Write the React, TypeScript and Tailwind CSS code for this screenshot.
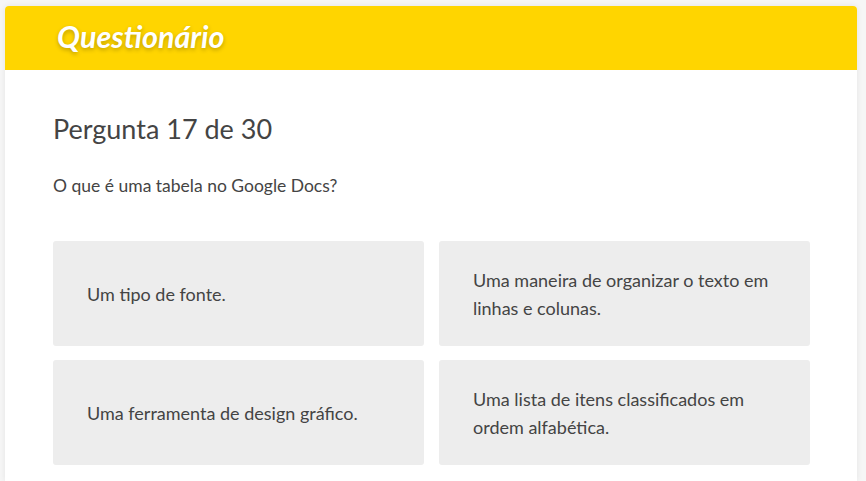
const options = [
  "Um tipo de fonte.",
  "Uma maneira de organizar o texto em linhas e colunas.",
  "Uma ferramenta de design gráfico.",
  "Uma lista de itens classificados em ordem alfabética.",
];

export default function App() {
  return (
    <div
      className="min-h-screen bg-[#f6f6f6] pt-[6px] pl-[5px] pr-[9px]"
      style={{ fontFamily: "Lato, 'Noto Sans', sans-serif" }}
    >
      <div className="w-[852px] rounded-t-[4px] bg-white shadow-[0_0_6px_rgba(0,0,0,0.08)]">
        <div className="flex h-[64px] items-center rounded-t-[4px] bg-[#ffd500] pl-[52px] pb-[3px]">
          <h1 className="text-[30.5px] font-bold italic text-white [text-shadow:0_2px_4px_rgba(0,0,0,0.25)]">
            Questionário
          </h1>
        </div>
        <div className="pl-[48px] pr-[47px] pt-[41px] pb-[16px] text-[#444]">
          <h2 className="text-[27px] leading-[36px]">Pergunta 17 de 30</h2>
          <p className="mt-[27px] text-[17.5px] leading-[24px]">O que é uma tabela no Google Docs?</p>
          <div className="mt-[43px] grid grid-cols-2 gap-x-[15px] gap-y-[14px]">
            {options.map((o) => (
              <div
                key={o}
                className="flex h-[105px] items-center rounded-[3px] bg-[#ededed] pl-[34px] pr-[30px] text-[18px] leading-[28px]"
              >
                {o}
              </div>
            ))}
          </div>
        </div>
      </div>
    </div>
  );
}
